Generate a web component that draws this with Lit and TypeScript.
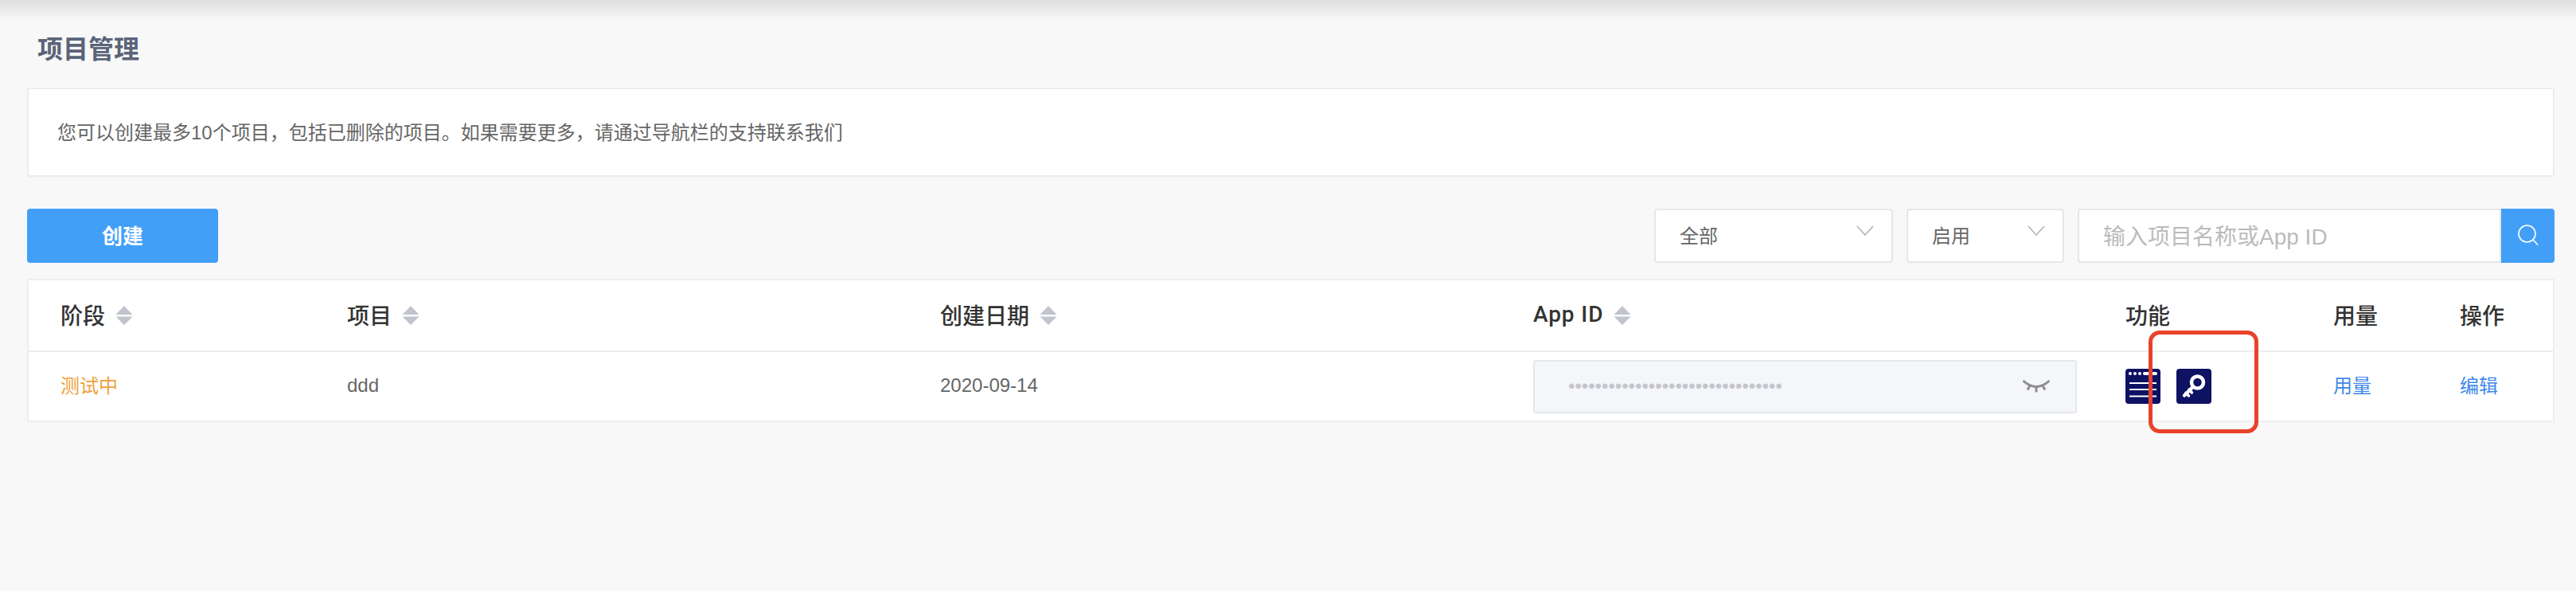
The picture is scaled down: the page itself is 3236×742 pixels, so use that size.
import { LitElement, html, css, svg } from 'lit';
import { customElement } from 'lit/decorators.js';

type Column = {
  name: string;
  sortable: boolean;
  latin?: boolean;
};

const columns: Column[] = [
  { name: '阶段', sortable: true },
  { name: '项目', sortable: true },
  { name: '创建日期', sortable: true },
  { name: 'App ID', sortable: true, latin: true },
  { name: '功能', sortable: false },
  { name: '用量', sortable: false },
  { name: '操作', sortable: false },
];

const sortIcon = svg`
  <svg class="sort" width="22" height="24" viewBox="0 0 22 24">
    <path d="M11 0 L21.5 11 H0.5 Z M0.5 13.5 H21.5 L11 24 Z" fill="#c0c4cc" />
  </svg>
`;

const chevron = svg`
  <svg class="chevron" width="22" height="13" viewBox="0 0 22 13">
    <path d="M1 1 L11 12 L21 1" fill="none" stroke="#a9adb5" stroke-width="1.4" />
  </svg>
`;

@customElement('app-root')
export class AppRoot extends LitElement {
  render() {
    return html`
      <div class="topbar"></div>
      <main class="page">
        <h1 class="title">项目管理</h1>
        <section class="notice">
          您可以创建最多10个项目，包括已删除的项目。如果需要更多，请通过导航栏的支持联系我们
        </section>

        <div class="toolbar">
          <button class="create">创建</button>
          <div class="filters">
            <div class="select all"><span>全部</span>${chevron}</div>
            <div class="select state"><span>启用</span>${chevron}</div>
            <div class="search">
              <div class="search-input">输入项目名称或App ID</div>
              <div class="search-button">
                <svg width="28" height="28" viewBox="0 0 28 28" fill="none" stroke="#fff" stroke-width="1.6">
                  <circle cx="12.5" cy="11.5" r="10.5" />
                  <path d="M20 19 L26 25.5" />
                </svg>
              </div>
            </div>
          </div>
        </div>

        <section class="table">
          <div class="row head">
            ${columns.map(
              column => html`<div class="cell">
                <span class=${column.latin ? 'latin' : ''}>${column.name}</span>${column.sortable ? sortIcon : ''}
              </div>`,
            )}
          </div>
          <div class="row body">
            <div class="cell cjk stage">测试中</div>
            <div class="cell text">ddd</div>
            <div class="cell text">2020-09-14</div>
            <div class="cell">
              <div class="app-id">
                <span class="dots">${'•'.repeat(32)}</span>
                <svg width="34" height="16" viewBox="0 0 34 16" fill="none" stroke="#8e8e93" stroke-width="3">
                  <path d="M0.5 1 Q17 16 33.5 1" />
                  <path d="M9.500 6.500 L6 12.500 M17 8.500 V15.500 M24.500 6.500 L28 12.500" />
                </svg>
              </div>
            </div>
            <div class="cell features">
              <svg width="44" height="44" viewBox="0 0 44 44">
                <rect width="44" height="44" rx="4" fill="#0f1163" />
                <g fill="#fff">
                  <circle cx="6" cy="6" r="2" />
                  <circle cx="12" cy="6" r="2" />
                  <circle cx="18" cy="6" r="2" />
                  <rect x="22" y="4" width="18" height="4" rx="2" />
                </g>
                <path d="M5 18 H39 M5 26 H39 M5 34.500 H39" stroke="#fff" stroke-width="2" />
              </svg>
              <svg width="44" height="44" viewBox="0 0 44 44">
                <rect width="44" height="44" rx="4" fill="#0f1163" />
                <circle cx="26.500" cy="17" r="7.500" fill="none" stroke="#fff" stroke-width="4.500" />
                <path d="M20.500 23 L10 33.500" stroke="#fff" stroke-width="4.500" stroke-linecap="round" />
                <path d="M12 30 L15.500 34 M16 26 L19.500 30" stroke="#fff" stroke-width="3.500" stroke-linecap="round" />
              </svg>
            </div>
            <div class="cell cjk link">用量</div>
            <div class="cell cjk link">编辑</div>
          </div>
        </section>
      </main>
      <div class="highlight"></div>
    `;
  }

  static styles = [
    css`
      :host {
        display: block;
        position: relative;
        width: 3236px;
        height: 742px;
        overflow: hidden;
        background: #f8f8f9;
        font-family: 'Liberation Sans', 'Noto Sans CJK SC', sans-serif;
        color: #666;
      }

      .topbar {
        height: 26px;
        margin-bottom: -26px;
        background: linear-gradient(#dedede, #f8f8f9);
      }

      .page {
        padding: 42px 27px 0 34px;
      }

      .title {
        margin: 0 0 28px 13px;
        font-size: 32px;
        line-height: 40px;
        font-weight: 700;
        color: #5a6478;
      }

      .notice {
        box-sizing: border-box;
        display: flex;
        align-items: center;
        height: 112px;
        padding: 0 36px 3px;
        background: #fff;
        border: 2px solid #ececee;
        border-radius: 2px;
        font-size: 24px;
        color: #666;
      }

      .toolbar {
        display: flex;
        justify-content: space-between;
        align-items: center;
        margin-top: 40px;
      }

      .create {
        width: 240px;
        height: 68px;
        padding: 0 0 3px;
        border: none;
        border-radius: 4px;
        background: #429ff8;
        color: #fff;
        font: inherit;
        font-size: 26px;
        font-weight: 700;
      }

      .filters {
        display: flex;
        gap: 17px;
        height: 68px;
      }

      .select {
        box-sizing: border-box;
        display: flex;
        justify-content: space-between;
        align-items: center;
        padding: 0 22px 3px 30px;
        background: #fff;
        border: 2px solid #e6e6e9;
        border-radius: 4px;
        font-size: 24px;
      }

      .all {
        width: 300px;
      }

      .state {
        width: 198px;
      }

      .chevron {
        margin-top: -10px;
      }

      .search {
        display: flex;
      }

      .search-input {
        box-sizing: border-box;
        display: flex;
        align-items: center;
        width: 532px;
        padding: 0 0 3px 30px;
        background: #fff;
        border: 2px solid #e6e6e9;
        border-radius: 4px 0 0 4px;
        font-size: 28px;
        color: #bbb;
      }

      .search-button {
        display: flex;
        justify-content: center;
        align-items: center;
        width: 67px;
        background: #429ff8;
        border-radius: 0 4px 4px 0;
      }

      .table {
        margin-top: 20px;
        background: #fff;
        border: 2px solid #eeeef0;
      }

      .row {
        display: grid;
        grid-template-columns: 400px 745px 745px 744px 261px 159px 1fr;
      }

      .head {
        height: 88px;
        border-bottom: 2px solid #eeeef0;
        font-family: Roboto, 'Noto Sans CJK SC', sans-serif;
        font-size: 28px;
        font-weight: 500;
        color: #333;
      }

      .head span {
        margin-top: -3px;
      }

      .head .latin {
        letter-spacing: 0.9px;
      }

      .body {
        height: 86px;
        font-size: 24px;
      }

      .cell {
        display: flex;
        align-items: center;
        min-width: 0;
      }

      .text {
        padding-bottom: 3px;
      }

      .cjk {
        padding-bottom: 6px;
      }

      .row .cell:first-child {
        padding-left: 40px;
      }

      .sort {
        margin-left: 13px;
      }

      .stage {
        color: #ef9f3d;
      }

      .app-id {
        box-sizing: border-box;
        display: flex;
        justify-content: space-between;
        align-items: center;
        width: 683px;
        height: 67px;
        padding: 0 32px 0 42px;
        background: #f5f6fa;
        border: 2px solid #e5e7ee;
        border-radius: 3px;
      }

      .dots {
        color: #c4c6cc;
        line-height: 1;
      }

      .features {
        gap: 20px;
      }

      .link {
        color: #3f88e8;
      }

      .highlight {
        position: absolute;
        left: 2699px;
        top: 415px;
        box-sizing: border-box;
        width: 138px;
        height: 129px;
        border: 5px solid #e8432a;
        border-radius: 14px;
      }
    `,
  ];
}

declare global {
  interface HTMLElementTagNameMap {
    'app-root': AppRoot;
  }
}
